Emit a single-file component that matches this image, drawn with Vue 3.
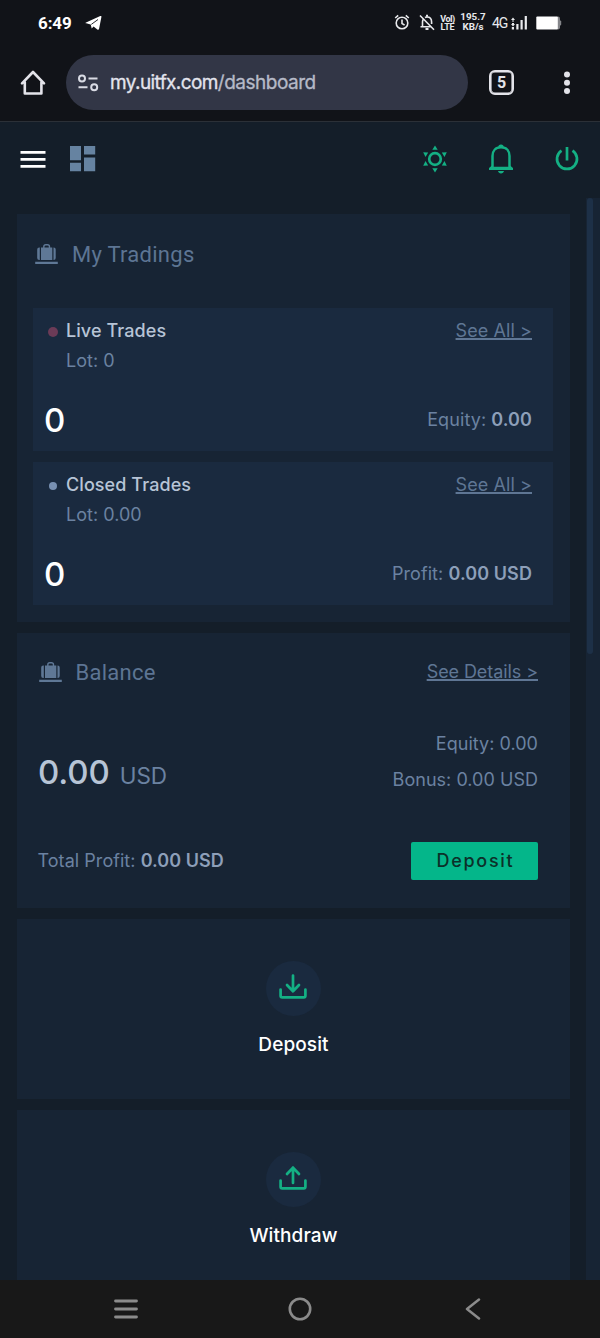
<script setup>
const trades = [
  { kind: 'live', title: 'Live Trades', lot: '0', count: 0, label: 'Equity', value: '0.00' },
  { kind: 'closed', title: 'Closed Trades', lot: '0.00', count: 0, label: 'Profit', value: '0.00 USD' },
]
const actions = [
  { label: 'Deposit', arrow: 'M14 1.5V17M8 11L14 17.3L20 11' },
  { label: 'Withdraw', arrow: 'M14 18V2.5M8 9L14 2.7L20 9' },
]
</script>

<template>
  <div class="screen">
    <div class="status">
      <span class="time">6:49</span>
      <svg class="plane" width="18" height="16" viewBox="0 0 18 16"><path d="M1 7.4L15.3 1c.8-.3 1.3.1 1.1 1l-2.3 11.7c-.2 1-1 1.200-1.800.7L8.600 11.500 6.700 13.600 5.700 9.600 1.200 8.300C.4 8.100.3 7.700 1 7.400z" fill="#fff"/><path d="M6.300 9.400L13 4.500" stroke="#111318" stroke-width=".9"/></svg>
      <span class="grow"></span>
      <svg class="alarm" width="16" height="17" viewBox="0 0 16 17" fill="none" stroke="#e8e9ec" stroke-width="1.600"><circle cx="8" cy="9" r="5.800"/><path d="M8 5.500v4l2.600 1.600M1.200 4L4.200 1.300M14.800 4L11.800 1.300"/></svg>
      <svg class="mute" width="16" height="17" viewBox="0 0 16 17" fill="none" stroke="#e8e9ec" stroke-width="1.600"><path d="M3.500 12.500V8c0-1 .2-2 .8-2.800M6 3.500C6.600 3.100 7.300 3 8 3c3 0 4.600 2 4.600 5v2M1.500 12.700H12M1 1.500L15 15.800"/><path d="M6.500 15h3M8 .8v2" stroke-width="2"/></svg>
      <span class="volte"><i>VoI)</i><i>LTE</i></span>
      <span class="speed"><i>195.7</i><i>KB/s</i></span>
      <span class="net">4G</span>
      <svg class="signal" width="17" height="16" viewBox="0 0 17 16" fill="#e8e9ec"><path d="M0 5L2 2.500 4 5zM0 9h4L2 11.500zM1 5.500h2v1H1zM1 8h2v1H1zM.8 12h2.200v2.500H.8zM5.300 9h2.200v5.500H5.300zM9.500 5h2.200v9.500H9.500zM13.700 1h2.200v13.500h-2.200z"/></svg>
      <svg class="battery" width="26" height="14" viewBox="0 0 26 14"><rect x="20" y=".5" width="4" height="13" rx="2" fill="#85868a"/><rect x="23" y="4.500" width="2.200" height="5" rx="1" fill="#85868a"/><rect x=".3" y=".5" width="21.500" height="13" rx="1" fill="#fff"/></svg>
    </div>

    <div class="browser">
      <svg class="home" width="26" height="26" viewBox="0 0 26 26" fill="none" stroke="#e3e3e9" stroke-width="2.600" stroke-linejoin="round" stroke-linecap="round"><path d="M4.800 12.300v11.200h16.600V12.300M2 13.300L13 2l11 11.300"/></svg>
      <div class="url">
        <svg width="22" height="18" viewBox="0 0 22 18" fill="none" stroke="#d9dbe4" stroke-width="2"><circle cx="5" cy="4.500" r="3"/><circle cx="17.200" cy="13.300" r="3"/><path d="M11.500 4.500h9M1.500 13.300h9"/></svg>
        <span class="address">my.uitfx.com<em>/dashboard</em></span>
      </div>
      <span class="tabs">5</span>
      <svg class="more" width="8" height="24" viewBox="0 0 8 24" fill="#e3e3e9"><circle cx="4" cy="3.400" r="3"/><circle cx="4" cy="11.700" r="3"/><circle cx="4" cy="20" r="3"/></svg>
    </div>

    <header class="topbar">
      <svg class="burger" width="26" height="18" viewBox="0 0 26 18" fill="#fff"><path d="M.5 1h25v2.700H.5zM.5 8h25v2.700H.5zM.5 15h25v2.700H.5z"/></svg>
      <svg class="grid" width="26" height="26" viewBox="0 0 26 26" fill="#6683a1"><path d="M0 0h11v14.300H0zM0 16.700h11v8.500H0zM14 0h11.200v8.500H14zM14 11.500h11.200v13.700H14z"/></svg>
      <span class="grow"></span>
      <svg class="sun" width="26" height="28" viewBox="0 0 26 28" fill="#14b084"><circle cx="13" cy="14" r="5.800" fill="none" stroke="#14b084" stroke-width="2.700"/><path d="M13 .5l2.700 4.300h-5.400zM13 27.500l2.700-4.300h-5.400zM1.200 7.200l5 .2-2.700 4.500zM24.800 7.200l-5 .2 2.700 4.500zM1.200 20.800l5-.2-2.700-4.500zM24.800 20.800l-5-.2 2.700-4.500z"/></svg>
      <svg class="bell" width="26" height="30" viewBox="0 0 26 30"><path d="M13 3.300c-5.500 0-8.500 3.700-8.500 8.700v12h17V12c0-5-3-8.700-8.500-8.700z" fill="none" stroke="#14b084" stroke-width="2.500"/><path d="M4 21.500L1 24v2h24v-2l-3-2.500v2H4zM10 27h6c-.4 1.600-1.400 2.400-3 2.400S10.400 28.600 10 27zM10.300 3.300a2.700 2.700 0 0 1 5.400 0z" fill="#14b084"/></svg>
      <svg class="power" width="24" height="26" viewBox="0 0 24 26" fill="none" stroke="#14b084" stroke-width="2.700"><path d="M12 1v13.500M6.500 4.600a10 10 0 1 0 11 0"/></svg>
    </header>

    <div class="viewport">
      <main>
        <section class="card tradings">
          <div class="heading">
            <svg width="23" height="22" viewBox="0 0 23 22" fill="#5f7896"><path d="M6 4.500h11.300V17H6zM4.800 4.500V17H4.200A2 2 0 0 1 2.200 15V6.500a2 2 0 0 1 2-2zM18.500 4.500h.2a2 2 0 0 1 2 2V15a2 2 0 0 1-2 2h-.2zM.2 18.800h22.600V21H.2z"/><path d="M8.800 5V3.800c0-1.300.8-2 2-2h1.700c1.200 0 2 .7 2 2V5" fill="none" stroke="#5f7896" stroke-width="1.400"/></svg>
            <h2>My Tradings</h2>
          </div>
          <article v-for="t in trades" :key="t.kind" class="trade">
            <div class="row">
              <span class="dot" :class="t.kind"></span>
              <strong class="name">{{ t.title }}</strong>
              <a class="link">See All &gt;</a>
            </div>
            <div class="lot">Lot: {{ t.lot }}</div>
            <div class="row bottom">
              <span class="count">{{ t.count }}</span>
              <span class="figure">{{ t.label }}: <b>{{ t.value }}</b></span>
            </div>
          </article>
        </section>

        <section class="card balance">
          <div class="heading">
            <svg width="23" height="22" viewBox="0 0 23 22" fill="#5f7896"><path d="M6 4.500h11.300V17H6zM4.800 4.500V17H4.200A2 2 0 0 1 2.200 15V6.500a2 2 0 0 1 2-2zM18.500 4.500h.2a2 2 0 0 1 2 2V15a2 2 0 0 1-2 2h-.2zM.2 18.800h22.600V21H.2z"/><path d="M8.800 5V3.800c0-1.300.8-2 2-2h1.700c1.200 0 2 .7 2 2V5" fill="none" stroke="#5f7896" stroke-width="1.400"/></svg>
            <h2>Balance</h2>
            <a class="link details">See Details &gt;</a>
          </div>
          <div class="middle">
            <div class="amount">0.00<small>USD</small></div>
            <div class="sums"><div>Equity: 0.00</div><div>Bonus: 0.00 USD</div></div>
          </div>
          <div class="foot">
            <span class="total">Total Profit: <b>0.00 USD</b></span>
            <button>Deposit</button>
          </div>
        </section>

        <section v-for="a in actions" :key="a.label" class="card action">
          <span class="disc">
            <svg width="28" height="26" viewBox="0 0 28 26" fill="none" stroke="#14b084" stroke-width="2.700" stroke-linecap="round" stroke-linejoin="round"><path :d="a.arrow"/><path d="M1.600 15.500v6.200c0 1 .6 1.600 1.600 1.600h21.600c1 0 1.600-.6 1.600-1.600v-6.200"/></svg>
          </span>
          <span class="label">{{ a.label }}</span>
        </section>
      </main>
      <div class="track"><div class="thumb"></div></div>
    </div>

    <nav>
      <svg width="24" height="20" viewBox="0 0 24 20" stroke="#8b8b8b" stroke-width="2.800" stroke-linecap="round"><path d="M1.500 2h21M1.500 10h21M1.500 18h21"/></svg>
      <svg class="circle" width="24" height="24" viewBox="0 0 24 24" fill="none" stroke="#8b8b8b" stroke-width="2.600"><circle cx="12" cy="12" r="10.200"/></svg>
      <svg width="16" height="22" viewBox="0 0 16 22" fill="none" stroke="#8b8b8b" stroke-width="2.500" stroke-linecap="round" stroke-linejoin="round"><path d="M14 1.500L2 11l12 9.500"/></svg>
    </nav>
  </div>
</template>

<style>
html, body { background: #141e29; }
</style>

<style scoped>
.screen { width: 600px; height: 1338px; overflow: hidden; display: flex; flex-direction: column; background: #141e29; font-family: Inter, "Liberation Sans", sans-serif; color: #6b82a1; }
svg { display: block; flex: none; }
.grow { flex: 1; }
i, em { font-style: normal; }
.status { height: 45px; background: #111318; display: flex; align-items: center; padding: 0 38px 0 38px; box-sizing: border-box; color: #e8e9ec; font-family: Roboto, sans-serif; }
.time { font-size: 17px; font-weight: 700; color: #fff; line-height: 20px; letter-spacing: -.1px; }
.plane { margin-left: 13px; }
.alarm { margin-right: 9px; }
.mute { margin-right: 5px; }
.volte, .speed { display: flex; flex-direction: column; align-items: center; font-weight: 700; }
.volte { width: 15px; font-size: 9px; line-height: 8px; margin-right: 5px; letter-spacing: -.5px; }
.volte i:last-child { letter-spacing: -.2px; }
.speed { width: 26px; font-size: 9.800px; line-height: 10px; margin: -1px 6px 0 0; }
.net { width: 16px; font-size: 14px; line-height: 16px; letter-spacing: -1px; margin-right: 3px; }
.signal { margin-right: 8px; }
.browser { height: 76px; background: #111318; border-bottom: 1px solid #2b3037; display: flex; align-items: center; padding: 0 29px 1px 20px; box-sizing: border-box; height: 77px; }
.url { margin-left: 20px; width: 402px; height: 55px; border-radius: 28px; background: #323646; display: flex; align-items: center; box-sizing: border-box; padding-left: 11px; }
.address { margin: 1px 0 0 11px; font-size: 19px; line-height: 24px; letter-spacing: -.6px; color: #e3e4ed; -webkit-text-stroke: .3px #e3e4ed; }
.address em { color: #b6bac8; -webkit-text-stroke: .3px #b6bac8; letter-spacing: -.5px; }
.tabs { margin-left: 21px; width: 25px; height: 25px; box-sizing: border-box; border: 2px solid #e3e3e9; box-shadow: inset 0 0 0 .6px #e3e3e9; border-radius: 6px; font: 700 16px/21px Roboto, sans-serif; color: #e3e3e9; text-align: center; }
.more { margin-left: auto; }
.topbar { height: 76px; display: flex; align-items: center; padding: 0 21px 2px 20px; box-sizing: border-box; }
.grid { margin-left: 24px; }
.bell { margin: 0 41px 0 40px; }
.viewport { flex: 1; min-height: 0; display: flex; overflow: hidden; }
main { width: 570px; box-sizing: border-box; padding: 16px 0 0 17px; display: flex; flex-direction: column; gap: 11px; }
.card { background: #172434; box-sizing: border-box; flex: none; }
.tradings { height: 408px; padding: 0 17px 0 16px; }
.heading { display: flex; align-items: center; }
h2 { margin: 2px 0 0; font: 400 22px/26px Roboto, sans-serif; letter-spacing: .27px; color: #5d7593; }
.tradings .heading { height: 79px; margin-bottom: 15px; padding-left: 2px; }
.tradings h2 { margin-left: 14px; }
.trade { height: 143px; background: #1a2a3f; margin-bottom: 11px; padding: 12px 21px 0 12px; box-sizing: border-box; font-size: 18px; line-height: 22px; letter-spacing: .03px; }
.row { display: flex; align-items: center; }
.dot { width: 10px; height: 10px; border-radius: 50%; background: #6b3b57; margin: 1px 8px 0 3px; }
.dot.closed { width: 8px; height: 8px; background: #7890b2; margin: 2px 9px 0 4px; }
.name { font-weight: 500; color: #b7c4d6; letter-spacing: .08px; }
.link { margin-left: auto; color: #5f7694; text-decoration: underline; text-decoration-thickness: 1.500px; text-underline-offset: 1px; text-decoration-skip-ink: none; letter-spacing: .08px; }
.lot { margin: 8px 0 0 21px; }
.bottom { margin-top: 28px; height: 40px; justify-content: space-between; }
.count { font-size: 33px; font-weight: 450; color: #fff; line-height: 40px; margin: -1px 0 0 -1px; }
.figure { letter-spacing: .08px; }
b { font-weight: 600; color: #8d9fb9; }
.balance { height: 275px; padding: 0 32px 0 21px; font-size: 18px; line-height: 22px; letter-spacing: .03px; }
.balance .heading { height: 78px; padding-left: 1px; }
.balance h2 { margin-left: 13.500px; }
.details { letter-spacing: -.08px; }
.middle { height: 100px; display: flex; justify-content: space-between; padding-top: 22px; box-sizing: border-box; }
.amount { font-size: 33px; font-weight: 450; line-height: 40px; padding-top: 19px; letter-spacing: -.1px; color: #b7c4d6; }
.amount small { margin-left: 10px; font-size: 22.500px; font-weight: 400; letter-spacing: -.1px; color: #6b82a1; }
.sums { text-align: right; line-height: 35.500px; margin-top: -7px; }
.foot { height: 98px; display: flex; align-items: center; justify-content: space-between; }
.foot .total { margin: 2px 0 0 -.5px; letter-spacing: .05px; }
button { width: 127px; height: 38px; border: 0; border-radius: 2px; background: #04b68a; color: #0c3029; font: 450 18px/22px Inter, sans-serif; letter-spacing: 1.700px; padding: 0 0 0 2px; margin-top: 2px; }
.action { height: 180px; display: flex; flex-direction: column; align-items: center; padding-top: 42px; }
.disc { width: 55px; height: 55px; border-radius: 50%; background: #1a2a3f; display: flex; align-items: center; justify-content: center; }
.disc svg { margin: 0 1px 4px 0; }
.label { margin-top: 17px; font-size: 19px; line-height: 24px; font-weight: 500; color: #fff; letter-spacing: .1px; }
.track { width: 14px; margin-left: 16px; background: #172434; }
.thumb { width: 6px; height: 456px; margin-left: 1px; background: #1d3047; border-radius: 3px; }
nav { height: 58px; background: #181818; display: flex; align-items: center; justify-content: space-between; padding: 0 119px 0 114px; box-sizing: border-box; }
.circle { margin-right: 4px; }
</style>
